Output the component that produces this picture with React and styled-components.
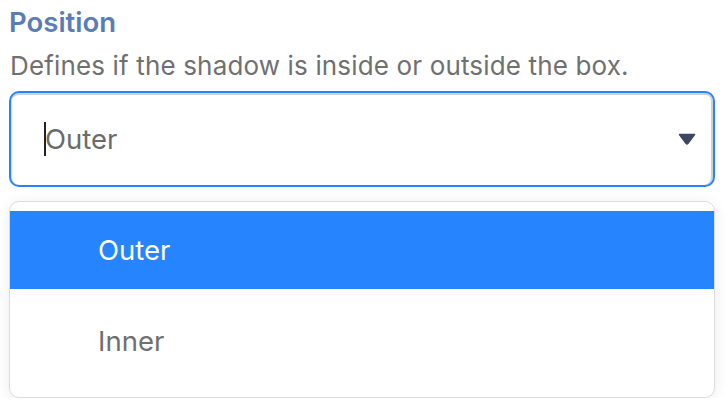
import React from "react";
import styled, { createGlobalStyle } from "styled-components";

const Global = createGlobalStyle`
  html, body { margin: 0; padding: 0; background: #ffffff; }
  body { font-family: Inter, "Noto Sans", Arial, sans-serif; }
`;

const Field = styled.div`
  width: 706px;
  padding: 6px 0 0 9px;
  display: flex;
  flex-direction: column;
`;

const Title = styled.h2`
  margin: 0;
  font-size: 27.5px;
  line-height: 32px;
  font-weight: 600;
  color: #5a7db5;
`;

const Description = styled.p`
  margin: 13px 0 0 1px;
  font-size: 26px;
  line-height: 30px;
  letter-spacing: 0.15px;
  color: #707070;
`;

const Control = styled.div`
  margin-top: 10px;
  height: 96px;
  box-sizing: border-box;
  border: 2px solid #2684ff;
  border-radius: 10px;
  box-shadow: inset 0 2px 0 #d2d2d2, inset -2px 0 0 #d2d2d2, inset 1px 0 0 #dcdcdc;
  display: flex;
  align-items: center;
  padding: 0 17px 0 33px;
`;

const Value = styled.span`
  flex: 1;
  display: flex;
  align-items: center;
  font-size: 27.5px;
  color: #6b6b6b;
`;

const Caret = styled.span`
  width: 2px;
  height: 34px;
  background: #222;
  margin-right: -1px;
`;

const Arrow = styled.svg`
  width: 18px;
  height: 12px;
  display: block;
`;

const Menu = styled.div`
  margin-top: 14px;
  height: 197px;
  box-sizing: border-box;
  border: 1.5px solid #dcdcdc;
  border-radius: 10px;
  box-shadow: 0 2px 14px rgba(0, 0, 0, 0.08);
  padding-top: 8.5px;
  overflow: hidden;
  display: flex;
  flex-direction: column;
`;

const Option = styled.div`
  height: ${(p) => p.$h}px;
  display: flex;
  align-items: center;
  padding-left: 88px;
  font-size: 27.5px;
  color: ${(p) => (p.$active ? "#ffffff" : "#6f6f6f")};
  background: ${(p) => (p.$active ? "#2684ff" : "transparent")};
`;

export default function App() {
  return (
    <>
      <Global />
      <Field>
        <Title>Position</Title>
        <Description>Defines if the shadow is inside or outside the box.</Description>
        <Control>
          <Value>
            <Caret />
            Outer
          </Value>
          <Arrow viewBox="0 0 18 12">
            <path d="M1.5 1.5 H16.5 L9.8 10.5 Q9 11.4 8.2 10.5 Z" fill="#3d4663" stroke="#3d4663" strokeWidth="1.5" strokeLinejoin="round" />
          </Arrow>
        </Control>
        <Menu>
          <Option $active $h={78}>Outer</Option>
          <Option $h={104}>Inner</Option>
        </Menu>
      </Field>
    </>
  );
}
